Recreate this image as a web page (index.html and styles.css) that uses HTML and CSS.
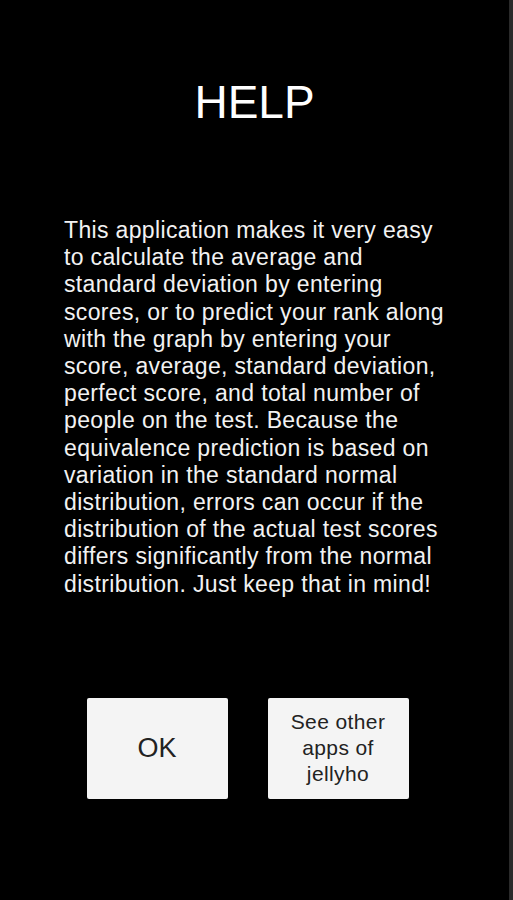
FILE: index.html
```html
<!DOCTYPE html>
<html lang="en">
<head>
    <meta charset="UTF-8">
    <meta name="viewport" content="width=device-width, initial-scale=1.0">
    <title>Help</title>
    <link rel="stylesheet" href="styles.css">
</head>
<body>
    <div class="screen">
        <h1 class="title">HELP</h1>
        <p class="help-text">This application makes it very easy to calculate the average and standard deviation by entering scores, or to predict your rank along with the graph by entering your score, average, standard deviation, perfect score, and total number of people on the test. Because the equivalence prediction is based on variation in the standard normal distribution, errors can occur if the distribution of the actual test scores differs significantly from the normal distribution. Just keep that in mind!</p>
        <div class="buttons">
            <div class="btn btn-ok">OK</div>
            <div class="btn btn-more">See other<br>apps of<br>jellyho</div>
        </div>
    </div>
</body>
</html>
```

FILE: styles.css
```css
html, body {
    margin: 0;
    height: 100%;
    background-color: #000;
}

body {
    font-family: "Liberation Sans", Arial, sans-serif;
}

.screen {
    height: 900px;
    box-sizing: border-box;
    border-right: 4px solid #2a2a2a;
    display: flex;
    flex-direction: column;
    align-items: center;
}

.title {
    margin: 79px 0 0 0;
    font-size: 46px;
    line-height: 46px;
    font-weight: normal;
    color: #fff;
}

.help-text {
    align-self: flex-start;
    width: 382px;
    margin: 92px 0 0 64px;
    font-size: 23px;
    line-height: 27.2px;
    letter-spacing: 0.35px;
    color: #f2f2f2;
}

.buttons {
    display: flex;
    gap: 40px;
    margin-top: 100px;
    margin-left: -14px;
}

.btn {
    width: 141px;
    height: 101px;
    background-color: #f4f4f4;
    border-radius: 2px;
    color: #222;
    display: flex;
    justify-content: center;
    align-items: center;
    text-align: center;
}

.btn-ok {
    font-size: 27px;
}

.btn-more {
    font-size: 21px;
    line-height: 26px;
    letter-spacing: 0.4px;
}
```
